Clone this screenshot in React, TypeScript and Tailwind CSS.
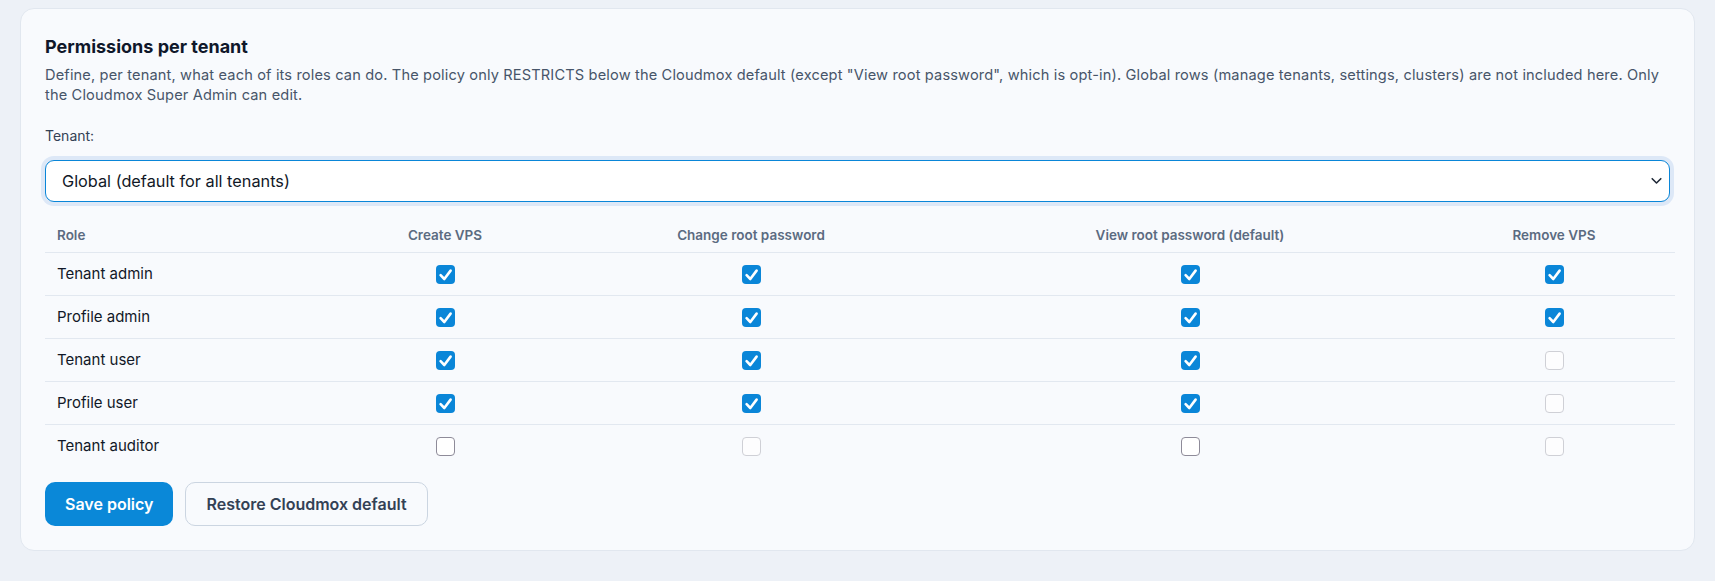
import { useState } from "react";

type Cell = { on: boolean; disabled?: boolean };

const columns = [
  { label: "Create VPS", w: "w-[220px]" },
  { label: "Change root password", w: "w-[392px]" },
  { label: "View root password (default)", w: "w-[486px]" },
  { label: "Remove VPS", w: "w-[242px]" },
];

const initialRows: { role: string; cells: Cell[] }[] = [
  { role: "Tenant admin", cells: [{ on: true }, { on: true }, { on: true }, { on: true }] },
  { role: "Profile admin", cells: [{ on: true }, { on: true }, { on: true }, { on: true }] },
  { role: "Tenant user", cells: [{ on: true }, { on: true }, { on: true }, { on: false, disabled: true }] },
  { role: "Profile user", cells: [{ on: true }, { on: true }, { on: true }, { on: false, disabled: true }] },
  {
    role: "Tenant auditor",
    cells: [{ on: false }, { on: false, disabled: true }, { on: false }, { on: false, disabled: true }],
  },
];

function Check({ cell, onToggle }: { cell: Cell; onToggle: () => void }) {
  if (cell.on) {
    return (
      <button
        type="button"
        onClick={onToggle}
        className="flex h-[19px] w-[19px] items-center justify-center rounded-[4px] bg-[#0a86d8]"
      >
        <svg width="19" height="19" viewBox="0 0 19 19" fill="none">
          <path
            d="M4.6 10.2 L8.3 14 L14.6 5.6"
            stroke="#ffffff"
            strokeWidth="2.6"
            strokeLinecap="round"
            strokeLinejoin="round"
          />
        </svg>
      </button>
    );
  }
  if (cell.disabled) {
    return <span className="block h-[19px] w-[19px] rounded-[4px] border border-[#cfd0d6] bg-[#fdfdfe]" />;
  }
  return (
    <button
      type="button"
      onClick={onToggle}
      className="block h-[19px] w-[19px] rounded-[4px] border border-[#8e8b99] bg-white"
    />
  );
}

export default function App() {
  const [rows, setRows] = useState(initialRows);

  const toggle = (r: number, c: number) =>
    setRows((prev) =>
      prev.map((row, ri) =>
        ri !== r
          ? row
          : { ...row, cells: row.cells.map((cell, ci) => (ci === c ? { ...cell, on: !cell.on } : cell)) }
      )
    );

  return (
    <div className="min-h-[581px] bg-[#edf1f7] px-5 pt-2 font-['Inter',sans-serif]">
      <div className="rounded-[14px] border border-[#e1e7ef] bg-[#f8fafd] px-6 pb-6 pt-6">
        <h2 className="text-[18px] font-bold leading-7 text-[#0f172a]">Permissions per tenant</h2>
        <p className="mt-1 text-[14.6px] leading-5 tracking-[0.15px] text-[#475569]">
          Define, per tenant, what each of its roles can do. The policy only RESTRICTS below the Cloudmox default
          (except "View root password", which is opt-in). Global rows (manage tenants, settings, clusters) are not
          included here. Only the Cloudmox Super Admin can edit.
        </p>

        <label className="mt-[21px] block text-[14px] leading-5 text-[#334155]">Tenant:</label>
        <div className="relative mt-[14px]">
          <select className="block h-[42px] w-full appearance-none rounded-[9px] border border-[#0a86d8] bg-white pl-4 pr-10 text-[16.3px] text-[#111827] outline-none ring-4 ring-[#dde8f7]">
            <option>Global (default for all tenants)</option>
          </select>
          <svg
            className="pointer-events-none absolute right-[8px] top-1/2 -translate-y-1/2"
            width="11"
            height="7"
            viewBox="0 0 11 7"
            fill="none"
          >
            <path d="M1.2 1.2 L5.5 5.5 L9.8 1.2" stroke="#1f2937" strokeWidth="1.6" strokeLinecap="round" strokeLinejoin="round" />
          </svg>
        </div>

        <table className="mt-[14px] w-full table-fixed border-collapse">
          <thead>
            <tr className="border-b border-[#e2e8f0]">
              <th className="w-[290px] px-3 pb-[9px] pt-[11px] text-left text-[13.5px] font-semibold leading-4 text-[#5b6b81]">
                Role
              </th>
              {columns.map((c) => (
                <th
                  key={c.label}
                  className={`${c.w} px-3 pb-[9px] pt-[11px] text-center text-[13.5px] font-semibold leading-4 text-[#5b6b81]`}
                >
                  {c.label}
                </th>
              ))}
            </tr>
          </thead>
          <tbody>
            {rows.map((row, ri) => (
              <tr key={row.role} className={ri < rows.length - 1 ? "border-b border-[#e2e8f0]" : ""}>
                <td className="p-0">
                  <div className="flex h-[42px] items-center px-3 text-[15px] text-[#111827]">{row.role}</div>
                </td>
                {row.cells.map((cell, ci) => (
                  <td key={ci} className="p-0">
                    <div className="flex h-[42px] items-center justify-center">
                      <Check cell={cell} onToggle={() => toggle(ri, ci)} />
                    </div>
                  </td>
                ))}
              </tr>
            ))}
          </tbody>
        </table>

        <div className="mt-[15px] flex gap-3">
          <button
            type="button"
            className="h-[44px] rounded-[10px] bg-[#0a88d8] px-5 text-[16px] font-semibold text-white"
          >
            Save policy
          </button>
          <button
            type="button"
            className="h-[44px] rounded-[10px] border border-[#cbd5e1] bg-[#f8fafd] px-5 text-[16px] font-semibold text-[#334155]"
          >
            Restore Cloudmox default
          </button>
        </div>
      </div>
    </div>
  );
}
